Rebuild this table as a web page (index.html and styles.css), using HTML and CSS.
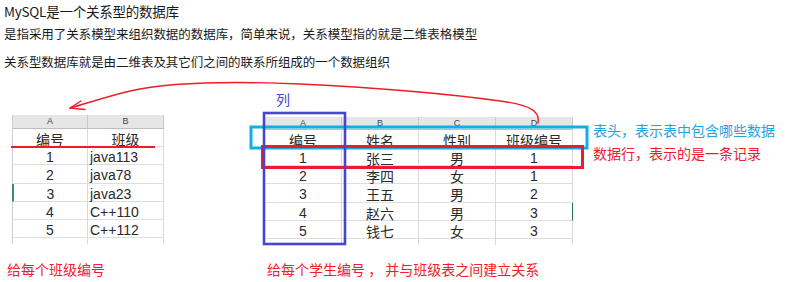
FILE: index.html
```html
<!DOCTYPE html>
<html lang="zh">
<head>
<meta charset="utf-8">
<title>MySQL 关系型数据库</title>
<link rel="stylesheet" href="styles.css">
</head>
<body>
<div class="page">
  <div class="intro">
    <p class="l1">MySQL是一个关系型的数据库</p>
    <p class="l2">是指采用了关系模型来组织数据的数据库，简单来说，关系模型指的就是二维表格模型</p>
    <p class="l3">关系型数据库就是由二维表及其它们之间的联系所组成的一个数据组织</p>
  </div>

  <div class="figure">
    <div class="col col-left">
      <div class="sheet sheet-left">
        <div class="row colhead"><div class="c">A</div><div class="c">B</div></div>
        <div class="row head"><div class="c ctr">编号</div><div class="c ctr">班级</div></div>
        <div class="row r18"><div class="c ctr num">1</div><div class="c txt">java113</div></div>
        <div class="row r19"><div class="c ctr num">2</div><div class="c txt">java78</div></div>
        <div class="row r18 sel-left"><div class="c ctr num">3</div><div class="c txt">java23</div></div>
        <div class="row r18"><div class="c ctr num">4</div><div class="c txt">C++110</div></div>
        <div class="row r18"><div class="c ctr num">5</div><div class="c txt">C++112</div></div>
        <div class="row tail"><div class="c"></div><div class="c"></div></div>
      </div>
      <p class="caption cap-left">给每个班级编号</p>
    </div>

    <div class="col col-right">
      <div class="sheet sheet-right">
        <div class="row colhead"><div class="c">A</div><div class="c">B</div><div class="c">C</div><div class="c">D</div></div>
        <div class="row head"><div class="c ctr">编号</div><div class="c ctr">姓名</div><div class="c ctr">性别</div><div class="c ctr">班级编号</div></div>
        <div class="row r18"><div class="c ctr num">1</div><div class="c ctr">张三</div><div class="c ctr">男</div><div class="c ctr num">1</div></div>
        <div class="row r18"><div class="c ctr num">2</div><div class="c ctr">李四</div><div class="c ctr">女</div><div class="c ctr num">1</div></div>
        <div class="row r19"><div class="c ctr num">3</div><div class="c ctr">王五</div><div class="c ctr">男</div><div class="c ctr num">2</div></div>
        <div class="row r18 sel-right"><div class="c ctr num">4</div><div class="c ctr">赵六</div><div class="c ctr">男</div><div class="c ctr num">3</div></div>
        <div class="row r18"><div class="c ctr num">5</div><div class="c ctr">钱七</div><div class="c ctr">女</div><div class="c ctr num">3</div></div>
        <div class="row tail"><div class="c"></div><div class="c"></div><div class="c"></div><div class="c"></div></div>
      </div>
      <p class="caption cap-right">给每个学生编号 ， 并与班级表之间建立关系</p>
    </div>

    <div class="notes">
      <p class="note note-blue">表头，表示表中包含哪些数据</p>
      <p class="note note-red">数据行，表示的是一条记录</p>
    </div>
  </div>

  <div class="label-col">列</div>

  <svg class="overlay" width="787" height="282" viewBox="0 0 787 282" aria-hidden="true">
    <path class="arrow" d="M538,123 C540,112 532,105 500,101 C450,94 380,88 300,84 C230,81 170,82 130,91 C105,97 85,104 70,108"/>
    <path class="arrow" d="M85,109.5 L70,108 L81,101"/>
    <line class="underline" x1="11" y1="147" x2="155" y2="147"/>
    <rect class="box-blue" x="251" y="127" width="336" height="21"/>
    <rect class="box-red" x="262.5" y="146.5" width="320" height="21"/>
    <rect class="box-purple" x="264" y="113" width="81" height="131"/>
  </svg>
</div>
</body>
</html>
```

FILE: styles.css
```css
* { box-sizing: border-box; }

html, body {
  margin: 0;
  padding: 0;
  background: #ffffff;
}

.page {
  position: relative;
  width: 787px;
  height: 282px;
  overflow: hidden;
  font-family: "Noto Sans CJK SC", "Noto Sans", sans-serif;
  color: #1a1a1a;
}

/* intro text */
.intro {
  padding-left: 4px;
  font-size: 12.5px;
  line-height: 22px;
  letter-spacing: -0.05px;
}
.intro p { margin: 0; white-space: nowrap; }
.intro .l1 { font-size: 13.5px; letter-spacing: -0.25px; }
.intro .l2 { margin-top: 1px; }
.intro .l3 { margin-top: 6px; }

/* figure */
.figure {
  display: flex;
  align-items: flex-start;
}

.col { display: flex; flex-direction: column; }
.col-left { margin-left: 7px; margin-top: 42px; width: 157px; }
.col-right { margin-left: 101px; margin-top: 44px; width: 308px; }

.sheet {
  display: flex;
  flex-direction: column;
  font-size: 14px;
  color: #2a2a2a;
}
.sheet-left { margin-left: 5px; width: 152px; }
.sheet-right { width: 308px; }

.row { display: flex; }
.sheet-left .c { width: 76px; }
.sheet-right .c { width: 77px; }

.c {
  border-right: 1px solid #dadada;
  border-bottom: 1px solid #dedede;
  white-space: nowrap;
}
.row .c:first-child { border-left: 1px solid #d0d0d0; }
.sheet-right .row .c:first-child { border-left: none; }

.colhead .c {
  height: 14px;
  background: #e6e6e6;
  border-right: 1px solid #c9c9c9;
  border-bottom: 1px solid #bdbdbd;
  font-family: "Liberation Sans", sans-serif;
  font-size: 9px;
  line-height: 13px;
  text-align: center;
  color: #444;
}
.sheet-right .colhead .c { height: 13px; line-height: 12px; }

.head .c { height: 18px; padding-top: 3px; line-height: 14px; }
.r18 .c { height: 18px; padding-top: 3px; line-height: 14px; }
.r19 .c { height: 19px; padding-top: 3px; line-height: 15px; }
.tail .c { height: 6px; border-bottom: none; }

.ctr { text-align: center; }
.txt { padding-left: 2px; }
.num, .txt { font-family: "Liberation Sans", "Noto Sans CJK SC", sans-serif; }

.sel-left .c:first-child { border-left: 2px solid #3f8f5f; }
.sel-right .c:last-child { border-right: 1px solid #217346; }

/* captions */
.caption {
  margin: 0;
  font-size: 14px;
  line-height: 20px;
  color: #f0202a;
  white-space: nowrap;
}
.cap-left { margin-top: 15px; }
.cap-right { margin-top: 14px; margin-left: 2px; }

/* notes */
.notes {
  margin-left: 20px;
  margin-top: 47px;
  display: flex;
  flex-direction: column;
  gap: 3px;
}
.note {
  margin: 0;
  font-size: 14px;
  line-height: 20px;
  white-space: nowrap;
}
.note-blue { color: #1ea5e0; }
.note-red { color: #ee2030; }

/* overlays */
.label-col {
  position: absolute;
  left: 276px;
  top: 89px;
  font-size: 14px;
  line-height: 20px;
  color: #4646cf;
}

.overlay {
  position: absolute;
  left: 0;
  top: 0;
  pointer-events: none;
}
.arrow {
  fill: none;
  stroke: #ee1c25;
  stroke-width: 1.4;
  stroke-linecap: round;
  stroke-linejoin: round;
}
.underline { stroke: #ee1c25; stroke-width: 2; }
.box-blue { fill: none; stroke: #0fb0e8; stroke-width: 3; }
.box-red { fill: none; stroke: #ee1c2b; stroke-width: 3; }
.box-purple { fill: none; stroke: #4646cf; stroke-width: 2.6; }
```
